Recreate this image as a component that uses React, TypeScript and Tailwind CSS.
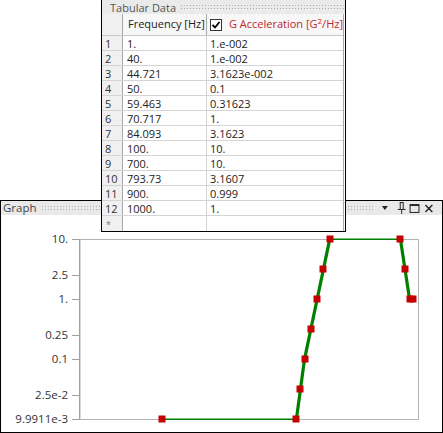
import React from "react";

const rows: [string, string][] = [
  ["1.", "1.e-002"],
  ["40.", "1.e-002"],
  ["44.721", "3.1623e-002"],
  ["50.", "0.1"],
  ["59.463", "0.31623"],
  ["70.717", "1."],
  ["84.093", "3.1623"],
  ["100.", "10."],
  ["700.", "10."],
  ["793.73", "3.1607"],
  ["900.", "0.999"],
  ["1000.", "1."],
];

const pts: [number, number][] = [
  [1, 0.01],
  [40, 0.01],
  [44.721, 0.031623],
  [50, 0.1],
  [59.463, 0.31623],
  [70.717, 1],
  [84.093, 3.1623],
  [100, 10],
  [700, 10],
  [793.73, 3.1607],
  [900, 0.999],
  [1000, 1],
];

const X = (f: number) => 162.3 + 83.7 * Math.log10(f);
const Y = (v: number) => 239.3 + 60 * (1 - Math.log10(v));

const yLabels: [string, number][] = [
  ["10.", 10],
  ["2.5", 2.5],
  ["1.", 1],
  ["0.25", 0.25],
  ["0.1", 0.1],
  ["2.5e-2", 0.025],
  ["9.9911e-3", 0.01],
];

const dots =
  "bg-[radial-gradient(circle,#a9a9a9_0.7px,transparent_0.8px)] bg-[length:3px_3px]";

function Chart() {
  const segs = [];
  for (let i = 0; i < pts.length - 1; i++) {
    const [f1, v1] = pts[i];
    const [f2, v2] = pts[i + 1];
    const horiz = Math.abs(Math.log10(v1) - Math.log10(v2)) < 0.01;
    segs.push(
      <line
        key={i}
        x1={X(f1)}
        y1={Y(v1)}
        x2={X(f2)}
        y2={Y(v2)}
        stroke="#008000"
        strokeWidth={horiz ? 1.4 : 3.2}
      />
    );
  }
  return (
    <svg width={441} height={217} viewBox="1 215 441 217" className="block">
      <rect x={80} y={239.5} width={338.5} height={180} fill="none" stroke="#b4b4b4" strokeWidth={1} />
      <line x1={79.5} y1={239} x2={79.5} y2={420} stroke="#a0a0a0" />
      {yLabels.map(([t, v]) => (
        <g key={t}>
          <line x1={72} y1={Math.round(Y(v)) + 0.5} x2={79} y2={Math.round(Y(v)) + 0.5} stroke="#a0a0a0" />
          <text
            x={68}
            y={Math.round(Y(v)) + 4}
            textAnchor="end"
            fontSize={11.5}
            fill="#333"
            fontFamily="'Open Sans', 'Noto Sans', sans-serif"
          >
            {t}
          </text>
        </g>
      ))}
      {segs}
      {pts.map(([f, v], i) => (
        <rect
          key={i}
          x={Math.round(X(f)) - 3.5}
          y={Math.round(Y(v)) - 3.5}
          width={7}
          height={7}
          fill="#c40000"
        />
      ))}
    </svg>
  );
}

export default function App() {
  return (
    <div
      className="relative w-[443px] h-[433px] bg-white overflow-hidden flex flex-col text-[#222]"
      style={{ fontFamily: "'Open Sans', 'Noto Sans', sans-serif" }}
    >
      <div className="h-[200px] shrink-0" />
      {/* Graph panel */}
      <div className="flex-1 border border-black flex flex-col bg-white">
        <div className="h-[14px] bg-[#e9e9e9] flex items-center pl-[2px] pr-[8px]">
          <span className="text-[11.5px] leading-none text-[#444]">Graph</span>
          <div className={`ml-[4px] w-[338px] h-[6px] ${dots}`} />
          <div className="flex-1" />
          <svg width="60" height="12" viewBox="0 0 60 12" className="block">
            <polygon points="7,4 13,4 10,8" fill="#222" />
            <g stroke="#222" strokeWidth="1" fill="none">
              <line x1="25.5" y1="0.5" x2="25.5" y2="7" />
              <line x1="28.5" y1="0.5" x2="28.5" y2="7" />
              <line x1="25" y1="0.5" x2="29" y2="0.5" />
              <line x1="23" y1="7.5" x2="31" y2="7.5" />
              <line x1="27" y1="8" x2="27" y2="12" />
              <rect x="35.5" y="2.5" width="9" height="8" />
              <line x1="35.5" y1="3.5" x2="44.5" y2="3.5" />
              <line x1="51" y1="3" x2="58" y2="10" strokeWidth="1.4" />
              <line x1="58" y1="3" x2="51" y2="10" strokeWidth="1.4" />
            </g>
          </svg>
        </div>
        <Chart />
      </div>

      {/* Floating Tabular Data window */}
      <div className="absolute left-[101px] top-0 w-[245px] h-[232px] border-x border-b border-black bg-white flex flex-col text-[11px]">
        <div className="h-[14px] bg-[#eaeaea] flex items-center pl-[8px]">
          <span className="text-[11px] leading-[13px] text-[#555]">Tabular Data</span>
          <div className={`ml-[4px] flex-1 h-[6px] ${dots}`} />
        </div>
        <div className="flex-1 flex flex-col border-r border-[#a8a8a8] mr-[1px]">
          <div className="h-[22px] flex border-b border-[#c8c8c8] bg-[#f7f7f7]">
            <div className="w-[21px] border-r border-[#a8a8a8] bg-[#f0f0f0]" />
            <div className="w-[84px] border-r border-[#a8a8a8] flex items-center pl-[5px] text-[#222]">
              Frequency [Hz]
            </div>
            <div className="flex-1 flex items-center pl-[3px]">
              <div className="w-[12px] h-[12px] border border-[#333] bg-white flex items-center justify-center mr-[7px]">
                <svg width="10" height="10" viewBox="0 0 10 10">
                  <polyline points="1.5,5 4,7.5 8.5,2" fill="none" stroke="#000" strokeWidth="1.8" />
                </svg>
              </div>
              <span className="text-[#c0282d] whitespace-nowrap">
                G Acceleration [G
                <span className="text-[8px] relative top-[-4px]">2</span>
                /Hz]
              </span>
            </div>
          </div>
          {rows.map(([a, b], i) => (
            <div key={i} className="h-[15px] flex border-b border-[#d4d4d4] leading-none">
              <div className="w-[21px] border-r border-[#a8a8a8] bg-[#f0f0f0] flex items-center pl-[3px] text-[#333]">
                {i + 1}
              </div>
              <div className="w-[84px] border-r border-[#d4d4d4] flex items-center pl-[4px]">{a}</div>
              <div className="flex-1 flex items-center pl-[3px]">{b}</div>
            </div>
          ))}
          <div className="flex-1 flex leading-none">
            <div className="w-[21px] border-r border-[#a8a8a8] bg-[#f0f0f0] flex items-start pt-[4px] pl-[4px] text-[9px] text-[#777]">
              *
            </div>
            <div className="w-[84px] border-r border-[#d4d4d4]" />
            <div className="flex-1" />
          </div>
        </div>
      </div>
    </div>
  );
}
